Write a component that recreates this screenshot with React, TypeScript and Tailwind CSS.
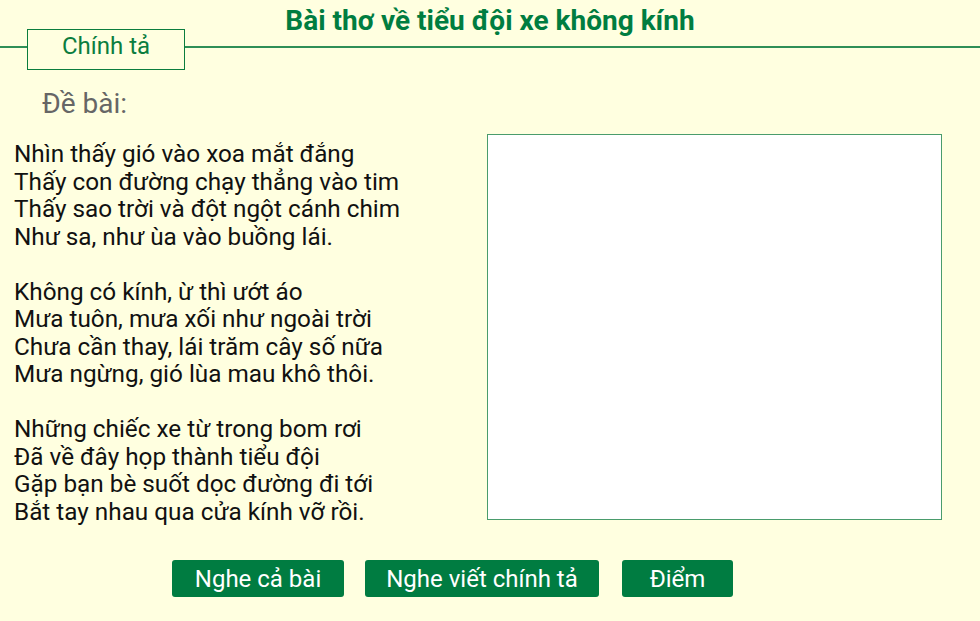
const poem = [
  ["Nhìn thấy gió vào xoa mắt đắng", "Thấy con đường chạy thẳng vào tim", "Thấy sao trời và đột ngột cánh chim", "Như sa, như ùa vào buồng lái."],
  ["Không có kính, ừ thì ướt áo", "Mưa tuôn, mưa xối như ngoài trời", "Chưa cần thay, lái trăm cây số nữa", "Mưa ngừng, gió lùa mau khô thôi."],
  ["Những chiếc xe từ trong bom rơi", "Đã về đây họp thành tiểu đội", "Gặp bạn bè suốt dọc đường đi tới", "Bắt tay nhau qua cửa kính vỡ rồi."],
];

export default function App() {
  return (
    <div className="w-[980px] h-[621px] overflow-hidden bg-[#ffffe0] font-['Roboto',sans-serif] flex flex-col">
      {/* Header */}
      <div className="h-[29px] pt-[4px] text-center text-[28px] font-bold leading-[34px] text-[#007d40] whitespace-nowrap">
        Bài thơ về tiểu đội xe không kính
      </div>
      <div className="flex items-start h-[41px]">
        <div className="w-[27px] h-[2px] mt-[17px] bg-[#2f8f57]" />
        <div className="w-[158px] h-[41px] border border-[#0b7d3e] text-center text-[24px] leading-[33px] text-[#0b7d3e]">
          Chính tả
        </div>
        <div className="flex-1 h-[2px] mt-[17px] bg-[#2f8f57]" />
      </div>

      <div className="mt-[19px] pl-[42px] text-[28px] leading-[30px] text-[#666666]">Đề bài:</div>

      {/* Content */}
      <div className="flex items-start h-[386px] mt-[15px]">
        <div className="w-[487px] shrink-0 pl-[14px] pt-[6px] text-[24.3px] leading-[27.5px] text-[#111111]">
          {poem.map((stanza, i) => (
            <div key={i} className={i > 0 ? "mt-[27.5px]" : ""}>
              {stanza.map((line, j) => (
                <div key={j} className="whitespace-nowrap">{line}</div>
              ))}
            </div>
          ))}
        </div>
        <div className="w-[455px] h-[386px] shrink-0 bg-white border border-[#4a9c6c]" />
      </div>

      {/* Buttons */}
      <div className="flex mt-[40px] pl-[172px]">
        <button className="w-[172px] h-[37px] rounded-[3px] bg-[#007c41] text-white text-[24px] leading-[30px]">Nghe cả bài</button>
        <button className="ml-[21px] w-[234px] h-[37px] rounded-[3px] bg-[#007c41] text-white text-[24px] leading-[30px]">Nghe viết chính tả</button>
        <button className="ml-[23px] w-[111px] h-[37px] rounded-[3px] bg-[#007c41] text-white text-[24px] leading-[30px]">Điểm</button>
      </div>
    </div>
  );
}
